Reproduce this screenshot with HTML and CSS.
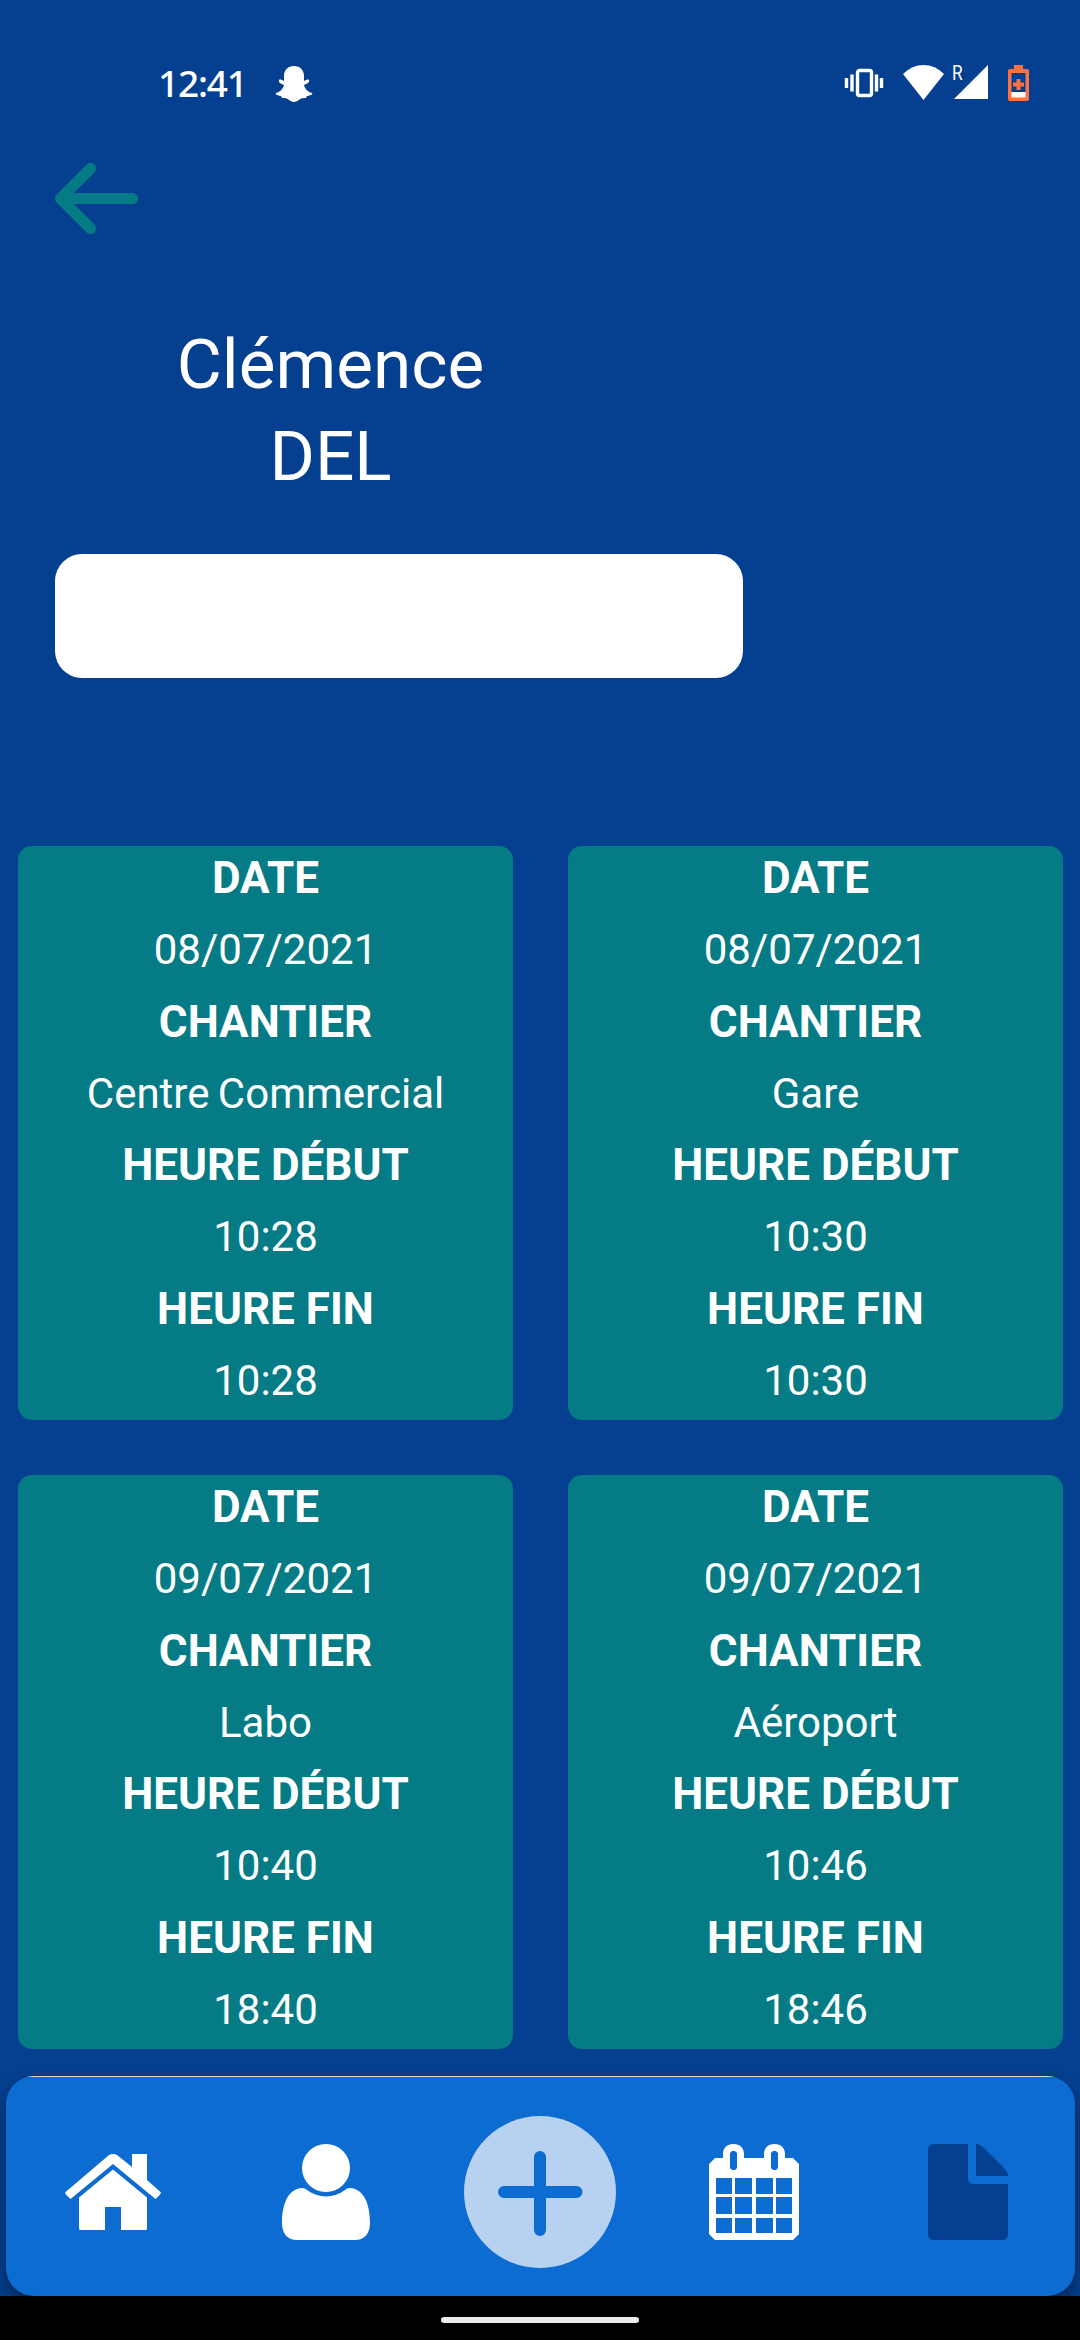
FILE: index.html
```html
<!DOCTYPE html>
<html lang="fr">
<head>
<meta charset="utf-8">
<title>Clémence DEL</title>
<link rel="stylesheet" href="styles.css">
</head>
<body>
<div class="screen">
  <header class="status">
    <span class="clock">12:41</span>
    <svg class="snap" width="38" height="36" viewBox="0 0 38 36"><path fill="#fff" d="M19 0C25 0 29 4 29 10V15C31 14 33 13 34 14C35 16 32 18 29 19C30 23 33 26 37 27C38 28 37 29 32 30L31 32C28 32 26 32 24 34C20 36.500 18 36.500 14 34C12 32 10 32 7 32L6 30C1 29 0 28 1 27C5 26 8 23 9 19C6 18 3 16 4 14C5 13 7 14 9 15V10C9 4 13 0 19 0Z"/></svg>
    <div class="indicators">
      <svg width="38" height="28" viewBox="0 0 38 28"><rect x="12.500" y="1.500" width="14" height="25" rx="2" fill="none" stroke="#fff" stroke-width="3.400"/><path stroke="#fff" stroke-width="3.400" d="M1.500 9v10M7 5.500v17M31.500 5.500v17M36.500 9v10"/></svg>
      <svg class="wifi" width="41" height="35" viewBox="0 0 41 35"><path fill="#fff" d="M0 9Q9 0 20.500 0T41 9L20.500 35Z"/></svg>
      <span class="roaming">R</span>
      <svg class="cell" width="34" height="34" viewBox="0 0 34 34"><path fill="#fff" d="M34 0V34H0Z"/></svg>
      <svg class="battery" width="21" height="36" viewBox="0 0 21 36"><path fill="#ff7043" d="M6 0h9v4h4q2 0 2 2v28q0 2-2 2H2q-2 0-2-2V6q0-2 2-2h4Z"/><path fill="#053f8f" d="M3.500 8h14v19h-14Z"/><path fill="#fff" d="M3.500 27h14v5.500h-14Z"/><path stroke="#ff7043" stroke-width="4" d="M5 19.500h11M10.500 14v11"/></svg>
    </div>
  </header>

  <div class="topbar">
    <svg class="back" width="84" height="72" viewBox="0 0 84 72"><path d="M35.500 5.500L5.500 35.500L35.500 65.500M7 35.500H77.500" fill="none" stroke="#057b86" stroke-width="11" stroke-linecap="round" stroke-linejoin="round"/></svg>
  </div>

  <h1 class="name">Clémence<br>DEL</h1>
  <div class="field"></div>

  <main class="cards">
    <dl class="card"><dt>DATE</dt><dd>08/07/2021</dd><dt>CHANTIER</dt><dd>Centre Commercial</dd><dt>HEURE DÉBUT</dt><dd>10:28</dd><dt>HEURE FIN</dt><dd>10:28</dd></dl>
    <dl class="card"><dt>DATE</dt><dd>08/07/2021</dd><dt>CHANTIER</dt><dd>Gare</dd><dt>HEURE DÉBUT</dt><dd>10:30</dd><dt>HEURE FIN</dt><dd>10:30</dd></dl>
    <dl class="card"><dt>DATE</dt><dd>09/07/2021</dd><dt>CHANTIER</dt><dd>Labo</dd><dt>HEURE DÉBUT</dt><dd>10:40</dd><dt>HEURE FIN</dt><dd>18:40</dd></dl>
    <dl class="card"><dt>DATE</dt><dd>09/07/2021</dd><dt>CHANTIER</dt><dd>Aéroport</dd><dt>HEURE DÉBUT</dt><dd>10:46</dd><dt>HEURE FIN</dt><dd>18:46</dd></dl>
  </main>

  <nav class="tabs">
    <a class="tab"><svg width="96" height="76" viewBox="0 0 96 76"><path fill="#fff" d="M0 38.500L44 1Q48-1 52 1L67 13V0H82V26L96 38.500Q96 40 90.500 45L48 10L5.500 45Q0 40 0 38.500ZM48 15.500L82 43.500V74.500Q82 76 80.500 76H56V53H40V76H15.500Q14 76 14 74.500V43.500Z"/></svg></a>
    <a class="tab"><svg width="89" height="96" viewBox="0 0 89 96"><circle cx="44" cy="24" r="24" fill="#fff"/><path fill="#fff" d="M20 44Q23 44 25 46C36 54.500 52 54.500 63 46Q65 44 68 44C82 45 88 60 88 79C88 90 82 96 73 96H15C6 96 0 90 0 79C0 60 6 45 20 44Z"/></svg></a>
    <a class="tab"><svg width="152" height="152" viewBox="0 0 152 152"><circle cx="76" cy="76" r="76" fill="#b7d1f0"/><path stroke="#0c6cd2" stroke-width="12" stroke-linecap="round" d="M40 76H112.500M76 41V114"/></svg></a>
    <a class="tab"><svg width="90" height="96" viewBox="0 0 90 96"><path fill="#fff" fill-rule="evenodd" d="M6 14H14V10C14 4 18 0 24.500 0S35 4 35 10V14H55V10C55 4 59 0 65.500 0S76 4 76 10V14H84L90 20V90L84 96H6L0 90V20ZM23 7L21 9V24L23 26H26L28 24V9L26 7ZM64 7L62 9V24L64 26H67L69 24V9L67 7ZM7 34H23V50H7ZM26 34H43V50H26ZM47 34H64V50H47ZM67 34H83V50H67ZM7 53H23V70H7ZM26 53H43V70H26ZM47 53H64V70H47ZM67 53H83V70H67ZM7 74H23V89H7ZM26 74H43V89H26ZM47 74H64V89H47ZM67 74H83V89H67Z"/></svg></a>
    <a class="tab"><svg width="80" height="96" viewBox="0 0 80 96"><path fill="#053f8f" d="M6 0H40V34Q40 40 46 40H80V90Q80 96 74 96H6Q0 96 0 90V6Q0 0 6 0ZM48 0Q52 0 57 5L75 23Q80 28 80 32H48Z"/></svg></a>
  </nav>
  <footer class="gesture"><span class="pill"></span></footer>
</div>
</body>
</html>
```

FILE: styles.css
```css
body {
  margin: 0;
  background: #053f8f;
  color: #fff;
  font-family: Roboto, sans-serif;
}
.screen {
  display: flex;
  flex-direction: column;
  width: 1080px;
  height: 2340px;
  overflow: hidden;
}
svg { display: block; flex: none; overflow: visible; }
.status {
  display: flex;
  align-items: flex-start;
  height: 98px;
  padding: 65px 51px 0 158px;
}
.clock {
  width: 117px;
  margin-top: -4px;
  font: 500 37px/44px "Noto Sans", sans-serif;
  letter-spacing: -1.2px;
}
.snap { margin-top: 1px; }
.indicators { display: flex; margin-left: auto; }
.indicators svg:first-child { margin-top: 4px; }
.wifi { margin-left: 20px; }
.roaming {
  width: 10px;
  margin: -4px 0 0 8px;
  font-size: 21px;
  line-height: 24px;
  transform: scaleX(.82);
  transform-origin: left;
}
.cell { margin-left: -8px; }
.battery { margin-left: 20px; }
.topbar { height: 156px; }
.back { margin-left: 55px; }
.name {
  width: 551px;
  height: 235px;
  margin: 0 0 0 55px;
  text-align: center;
  font-weight: 400;
  font-size: 69.3px;
  line-height: 92px;
}
.field {
  flex: none;
  width: 688px;
  height: 124px;
  margin-left: 55px;
  border-radius: 27px;
  background: #fff;
}
.cards {
  display: grid;
  grid-template-columns: 495px 495px;
  gap: 55px;
  margin: 168px 0 27px 18px;
}
.card {
  margin: 0;
  height: 574px;
  border-radius: 14px;
  background: #057b86;
  text-align: center;
}
.card dt { height: 72px; font-size: 44px; font-weight: 700; line-height: 64px; }
.card dd { height: 71.5px; margin: 0; font-size: 42px; line-height: 63px; word-spacing: -2px; }
.tabs {
  display: flex;
  flex: none;
  align-items: center;
  box-sizing: border-box;
  height: 220px;
  margin: 0 5px 0 6px;
  padding-top: 12px;
  border-radius: 28px;
  background: linear-gradient(#d8d8d8, #d8d8d8) center top / calc(100% - 42px) 1px no-repeat #0c6cd2;
  box-shadow: 0 8px 16px rgba(0, 0, 0, .4);
}
.tab { display: flex; flex: 1; justify-content: center; }
.gesture {
  position: relative;
  display: flex;
  justify-content: center;
  align-items: center;
  height: 44px;
  background: #000;
}
.pill { width: 198px; height: 6px; margin-top: 4px; border-radius: 3px; background: #e8ecea; }
```
